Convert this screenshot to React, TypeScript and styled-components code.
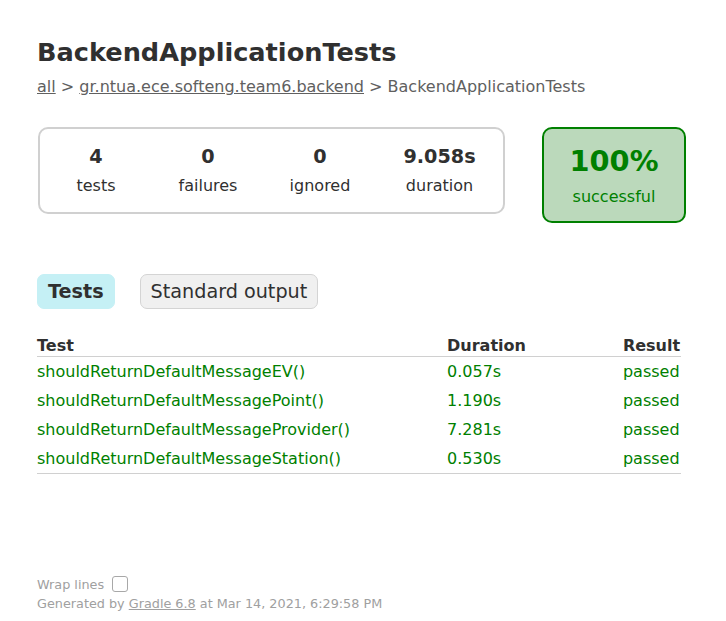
import React from "react";
import styled, { createGlobalStyle } from "styled-components";

const Global = createGlobalStyle`
  html, body { margin: 0; padding: 0; background: #ffffff; }
  body {
    font-family: "DejaVu Sans", sans-serif;
    font-size: 16px;
    color: #303030;
  }
`;

const Content = styled.div`
  padding: 20px 37px 20px 37px;
`;

const Title = styled.h1`
  font-size: 25.6px;
  font-weight: bold;
  margin: 17px 0 10px 0;
  white-space: nowrap;
`;

const Breadcrumbs = styled.div`
  color: #606060;
  white-space: nowrap;
  a { color: #606060; }
`;

const Summary = styled.div`
  display: flex;
  align-items: flex-start;
  margin-top: 31px;
  margin-bottom: 41px;
`;

const SummaryGroup = styled.div`
  display: flex;
  margin-left: 1px;
  border: solid 2px #d0d0d0;
  border-radius: 10px;
`;

const InfoBox = styled.div<{ $w: number }>`
  width: ${(p) => p.$w}px;
  padding: 16px 0 17px;
  text-align: center;
  box-sizing: content-box;
  margin: 0 1px;
`;

const Counter = styled.div<{ $big?: boolean }>`
  font-size: ${(p) => (p.$big ? "28.8px" : "19.2px")};
  font-weight: bold;
  margin-bottom: ${(p) => (p.$big ? 9 : 8)}px;
`;

const Label = styled.div``;

const SuccessRate = styled.div`
  width: 140px;
  margin-left: 37px;
  border: solid 2px #008000;
  border-radius: 10px;
  background-color: #bbd9bb;
  color: #008000;
  padding: 15px 0 15px;
  text-align: center;
`;

const Tabs = styled.ul`
  display: flex;
  padding: 10px 0;
  margin: 0 0 17px 0;
  list-style: none;
`;

const Tab = styled.li<{ $selected?: boolean }>`
  padding: 5px 10px;
  border-radius: 7px;
  margin-right: 25px;
  border: solid 1px ${(p) => (p.$selected ? "#c5f0f5" : "#d4d4d4")};
  background-color: ${(p) => (p.$selected ? "#c5f0f5" : "#f0f0f0")};
  font-size: 19.2px;
  font-weight: ${(p) => (p.$selected ? "bold" : "normal")};
  color: #303030;
`;

const Table = styled.table`
  border-collapse: collapse;
  border-bottom: solid #d0d0d0 1px;
`;

const Th = styled.th<{ $first?: boolean; $last?: boolean }>`
  text-align: left;
  white-space: nowrap;
  padding: 0 ${(p) => (p.$last ? 1 : 0)}px 1px ${(p) => (p.$first ? 0 : 97)}px;
  border-bottom: solid #d0d0d0 1px;
`;

const Td = styled.td<{ $first?: boolean; $last?: boolean }>`
  white-space: nowrap;
  padding: 5px ${(p) => (p.$last ? 1 : 0)}px 5px ${(p) => (p.$first ? 0 : 97)}px;
  color: #008000;
`;

const Footer = styled.div`
  margin-top: 102px;
  font-size: 12.8px;
  white-space: nowrap;
  color: #a0a0a0;
  a { color: #a0a0a0; }
`;

const WrapRow = styled.div`
  display: flex;
  align-items: center;
  gap: 8px;
  margin-bottom: 4px;
`;

const CheckBox = styled.span`
  display: inline-block;
  width: 14px;
  height: 14px;
  border: 1px solid #a8a8a8;
  border-radius: 3px;
  background: #fff;
`;

const tests = [
  ["shouldReturnDefaultMessageEV()", "0.057s"],
  ["shouldReturnDefaultMessagePoint()", "1.190s"],
  ["shouldReturnDefaultMessageProvider()", "7.281s"],
  ["shouldReturnDefaultMessageStation()", "0.530s"],
];

export default function App() {
  return (
    <>
      <Global />
      <Content>
        <Title>BackendApplicationTests</Title>
        <Breadcrumbs>
          <a href="#">all</a> &gt; <a href="#">gr.ntua.ece.softeng.team6.backend</a> &gt; BackendApplicationTests
        </Breadcrumbs>
        <Summary>
          <SummaryGroup>
            <InfoBox $w={110}>
              <Counter>4</Counter>
              <Label>tests</Label>
            </InfoBox>
            <InfoBox $w={110}>
              <Counter>0</Counter>
              <Label>failures</Label>
            </InfoBox>
            <InfoBox $w={110}>
              <Counter>0</Counter>
              <Label>ignored</Label>
            </InfoBox>
            <InfoBox $w={125}>
              <Counter>9.058s</Counter>
              <Label>duration</Label>
            </InfoBox>
          </SummaryGroup>
          <SuccessRate>
            <Counter $big>100%</Counter>
            <Label>successful</Label>
          </SuccessRate>
        </Summary>
        <Tabs>
          <Tab $selected>Tests</Tab>
          <Tab>Standard output</Tab>
        </Tabs>
        <Table>
          <thead>
            <tr>
              <Th $first>Test</Th>
              <Th>Duration</Th>
              <Th $last>Result</Th>
            </tr>
          </thead>
          <tbody>
            {tests.map(([name, d]) => (
              <tr key={name}>
                <Td $first>{name}</Td>
                <Td>{d}</Td>
                <Td $last>passed</Td>
              </tr>
            ))}
          </tbody>
        </Table>
        <Footer>
          <WrapRow>
            <span>Wrap lines</span>
            <CheckBox />
          </WrapRow>
          <div>
            Generated by <a href="#">Gradle 6.8</a> at Mar 14, 2021, 6:29:58 PM
          </div>
        </Footer>
      </Content>
    </>
  );
}
